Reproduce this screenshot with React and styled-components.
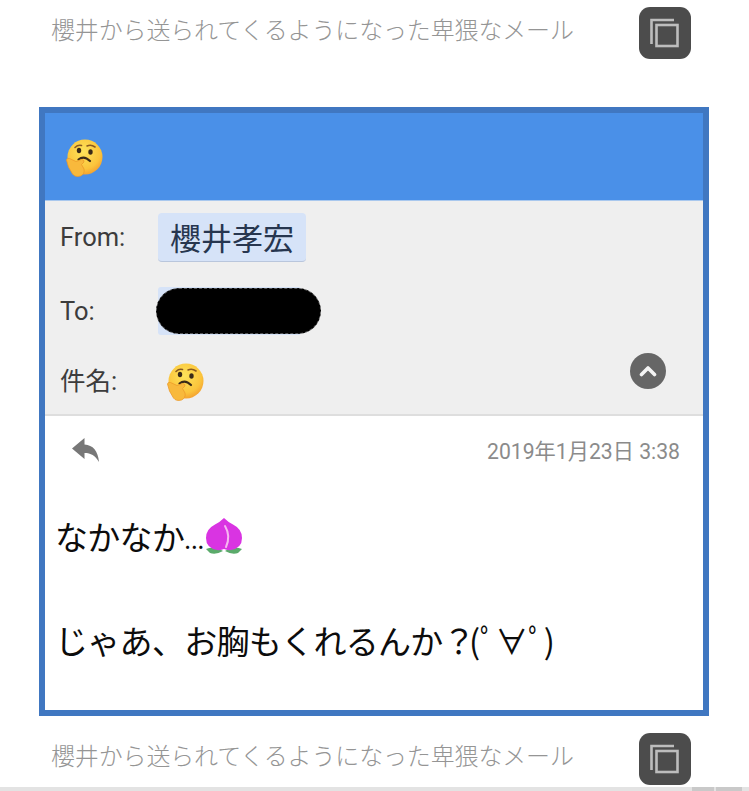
import React from 'react';
import styled, { createGlobalStyle } from 'styled-components';

const Global = createGlobalStyle`
  html, body {
    margin: 0;
    padding: 0;
    background: #fff;
    overflow: hidden;
  }
  body {
    font-family: Roboto, "Noto Sans CJK JP", sans-serif;
  }
`;

const Page = styled.div`
  width: 749px;
  height: 791px;
  overflow: hidden;
  display: flex;
  flex-direction: column;
`;

const CaptionRow = styled.div`
  display: flex;
  align-items: center;
  justify-content: space-between;
  height: 52px;
  padding: 0 58px 0 52px;
  margin-top: ${(p) => p.$top}px;
`;

const CaptionText = styled.div`
  font-family: "Noto Sans CJK JP", sans-serif;
  font-size: 24px;
  font-weight: 300;
  line-height: 30px;
  letter-spacing: -0.15px;
  color: #959595;
  white-space: nowrap;
  margin: 0 0 8px -1px;
`;

const CopyButton = styled.button`
  width: 52px;
  height: 52px;
  padding: 0;
  border: 0;
  border-radius: 11px;
  background: #4c4c4c;
  display: flex;
  align-items: center;
  justify-content: center;
`;

const Card = styled.div`
  margin: 48px 40px 0 39px;
  height: 609px;
  box-sizing: border-box;
  border: 6px solid #4077c1;
  display: flex;
  flex-direction: column;
  background: #fff;
`;

const BlueBar = styled.div`
  height: 88px;
  flex: none;
  background: #4a90e8;
  border-bottom: 1px solid #a9c8ee;
  display: flex;
  align-items: center;
  padding: 3px 0 0 19px;
  box-sizing: border-box;
`;

const HeaderBlock = styled.div`
  height: 215px;
  flex: none;
  box-sizing: border-box;
  background: #efefef;
  border-bottom: 2px solid #dedede;
  display: grid;
  grid-template-rows: 74px 74px 65px;
  position: relative;
`;

const HeaderRow = styled.div`
  display: flex;
  align-items: center;
  padding-left: 15px;
`;

const Label = styled.div`
  width: 98px;
  flex: none;
  font-size: 25.5px;
  color: #3c3c3c;
  line-height: 30px;
  margin-bottom: 2px;
`;

const Chip = styled.div`
  height: 49px;
  box-sizing: border-box;
  padding: 0 12px;
  margin-bottom: 2px;
  display: flex;
  align-items: center;
  font-family: "Noto Sans CJK JP", sans-serif;
  font-size: 31px;
  font-weight: 400;
  color: #27364f;
  background: #d6e3f8;
  border-radius: 4px;
  border-bottom: 1px solid #b9c6dc;
`;

const RedactedChip = styled.div`
  position: relative;
  width: 143px;
  height: 48px;
  margin-bottom: 2px;
  background: #d6e3f8;
  border-radius: 3px;
`;

const Redaction = styled.div`
  position: absolute;
  left: -2px;
  top: 1px;
  width: 165px;
  height: 46px;
  box-sizing: border-box;
  background: #000;
  border: 1px dashed #555;
  border-radius: 23px;
`;

const SubjectEmoji = styled.div`
  margin-left: 7px;
  display: flex;
`;

const Toggle = styled.div`
  position: absolute;
  left: 585px;
  top: 152px;
  width: 36px;
  height: 36px;
  border-radius: 50%;
  background: #666;
  display: flex;
  align-items: center;
  justify-content: center;
`;

const MetaRow = styled.div`
  display: flex;
  align-items: center;
  justify-content: space-between;
  height: 68px;
  padding: 0 23px 0 27px;
`;

const DateText = styled.div`
  font-size: 21.2px;
  color: #8b8b8b;
  line-height: 28px;
  padding-top: 4px;
`;

const Body = styled.div`
  padding-left: 10px;
  padding-top: 26px;
`;

const BodyLine = styled.div`
  display: flex;
  align-items: center;
  height: 52px;
  margin-bottom: ${(p) => p.$gap || 0}px;
  font-family: "Noto Sans CJK JP", sans-serif;
  font-size: 33px;
  font-weight: 400;
  letter-spacing: -0.7px;
  color: #0c0c0c;
  white-space: pre;
`;

const Dots = styled.span`
  font-size: 24px;
  letter-spacing: 0;
  align-self: flex-end;
  padding-bottom: 6px;
`;

const Kaomoji = styled.span`
  letter-spacing: -1.2px;
  margin-left: -6px;
`;

const BottomStrip = styled.div`
  margin-top: 2px;
  height: 4px;
  flex: none;
  background: #e3e3e3;
  display: flex;
  justify-content: flex-end;
  gap: 2px;
  padding-right: 7px;
`;

const StripTab = styled.div`
  width: ${(p) => p.$w}px;
  background: #c9c9c9;
`;

const CopyIcon = () => (
  <svg width="30" height="30" viewBox="0 0 30 30" fill="none" stroke="#bdbdbd" strokeWidth="2.6">
    <path d="M1.5 26 V2 H24" />
    <rect x="6.5" y="7" width="21" height="21" />
  </svg>
);

const ThinkingFace = ({ id }) => (
  <svg width="40" height="40" viewBox="0 0 40 40">
    <defs>
      <radialGradient id={id} cx="45%" cy="35%" r="70%">
        <stop offset="0%" stopColor="#fde35a" />
        <stop offset="70%" stopColor="#fbc43c" />
        <stop offset="100%" stopColor="#f29a2e" />
      </radialGradient>
    </defs>
    <circle cx="21" cy="19" r="17.5" fill={`url(#${id})`} />
    <path d="M11 9.5 Q14 6.5 17.5 7.5" stroke="#8a5a20" strokeWidth="1.6" fill="none" strokeLinecap="round" />
    <path d="M23 8 Q27 6 31 9" stroke="#8a5a20" strokeWidth="1.6" fill="none" strokeLinecap="round" />
    <ellipse cx="15" cy="12.5" rx="2.2" ry="2.7" fill="#3a2a18" />
    <ellipse cx="26.5" cy="14" rx="2.2" ry="2.7" fill="#3a2a18" />
    <path d="M14.5 21.5 Q20 17 26 23" stroke="#3a2a18" strokeWidth="2.2" fill="none" strokeLinecap="round" />
    <path
      d="M2.5 22 Q3 19.5 5.5 20.5 L12 23.5 L17.5 21.5 Q20.5 21.5 20 24 L17.5 26.5 L20 31 Q21 36 16.5 38 Q11 39.5 8.5 36 L4.5 29 Z"
      fill="#f8b93c"
      stroke="#ec9a2a"
      strokeWidth="0.8"
    />
  </svg>
);

const Peach = () => (
  <svg width="40" height="38" viewBox="0 0 40 38">
    <path d="M2 32 Q10 28 19 34 Q12 38 6 36 Z" fill="#5bab6b" />
    <path d="M38 32 Q30 28 21 34 Q28 38 34 36 Z" fill="#5bab6b" />
    <path
      d="M20 1 Q24 5 29 7.5 Q38 12 38 21 Q38 31 27 33 Q23 33.5 20 32 Q17 33.5 13 33 Q2 31 2 21 Q2 12 11 7.5 Q16 5 20 1 Z"
      fill="#d934e2"
    />
    <path d="M21 9 Q27 19 22 30" stroke="#f6b7f0" strokeWidth="2" fill="none" strokeLinecap="round" />
  </svg>
);

const ReplyIcon = () => (
  <svg width="27" height="24" viewBox="0 0 27 24">
    <path d="M0 10.5 L12.5 0 V6.5 C21 7 26 13 27 24 C23 17.5 19 15 12.5 15 V21 Z" fill="#777" />
  </svg>
);

const Chevron = () => (
  <svg width="18" height="12" viewBox="0 0 18 12" fill="none" stroke="#f4f4f4" strokeWidth="3.6" strokeLinecap="round" strokeLinejoin="round">
    <path d="M2.5 9.5 L9 3 L15.5 9.5" />
  </svg>
);

const Caption = ({ top }) => (
  <CaptionRow $top={top}>
    <CaptionText>櫻井から送られてくるようになった卑猥なメール</CaptionText>
    <CopyButton aria-label="copy">
      <CopyIcon />
    </CopyButton>
  </CaptionRow>
);

export default function App() {
  return (
    <Page>
      <Global />
      <Caption top={7} />
      <Card>
        <BlueBar>
          <ThinkingFace id="faceTop" />
        </BlueBar>
        <HeaderBlock>
          <HeaderRow>
            <Label>From:</Label>
            <Chip>櫻井孝宏</Chip>
          </HeaderRow>
          <HeaderRow>
            <Label>To:</Label>
            <RedactedChip>
              <Redaction />
            </RedactedChip>
          </HeaderRow>
          <HeaderRow>
            <Label>件名:</Label>
            <SubjectEmoji>
              <ThinkingFace id="faceSubject" />
            </SubjectEmoji>
          </HeaderRow>
          <Toggle>
            <Chevron />
          </Toggle>
        </HeaderBlock>
        <MetaRow>
          <ReplyIcon />
          <DateText>2019年1月23日 3:38</DateText>
        </MetaRow>
        <Body>
          <BodyLine $gap={52}>
            <span>なかなか</span>
            <Dots>...</Dots>
            <Peach />
          </BodyLine>
          <BodyLine>
            <span>じゃあ、お胸もくれるんか？</span>
            <Kaomoji>(ﾟ∀ﾟ)</Kaomoji>
          </BodyLine>
        </Body>
      </Card>
      <Caption top={17} />
      <BottomStrip>
        <StripTab $w={22} />
        <StripTab $w={26} />
      </BottomStrip>
    </Page>
  );
}
